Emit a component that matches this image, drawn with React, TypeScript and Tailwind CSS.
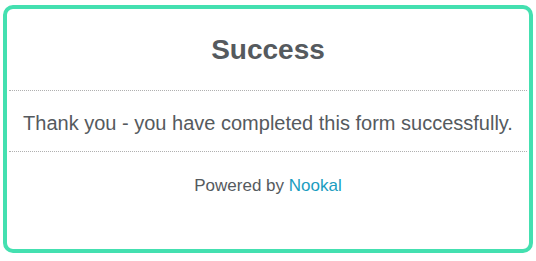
export default function App() {
  return (
    <div className="w-[536px] h-[261px] bg-white pt-[5px] pl-[3px]" style={{ fontFamily: '"Liberation Sans", Arial, sans-serif' }}>
      <div className="w-[530px] h-[248px] border-4 border-[#44e0b0] rounded-[10px] flex flex-col px-[2px]">
        <div className="h-[82px] flex items-center justify-center border-b border-dotted border-[#b0b0b0]">
          <h1 className="text-[28px] font-bold text-[#555a5e] leading-none">Success</h1>
        </div>
        <div className="h-[61px] pt-[3px] flex items-center justify-center border-b border-dotted border-[#b0b0b0]">
          <p className="text-[20px] text-[#555a5e] leading-none">Thank you - you have completed this form successfully.</p>
        </div>
        <div className="pt-[24px] flex justify-center">
          <p className="text-[17px] leading-[20px] text-[#555a5e]">
            Powered by <a className="text-[#1a9dbf]" href="#">Nookal</a>
          </p>
        </div>
      </div>
    </div>
  );
}
